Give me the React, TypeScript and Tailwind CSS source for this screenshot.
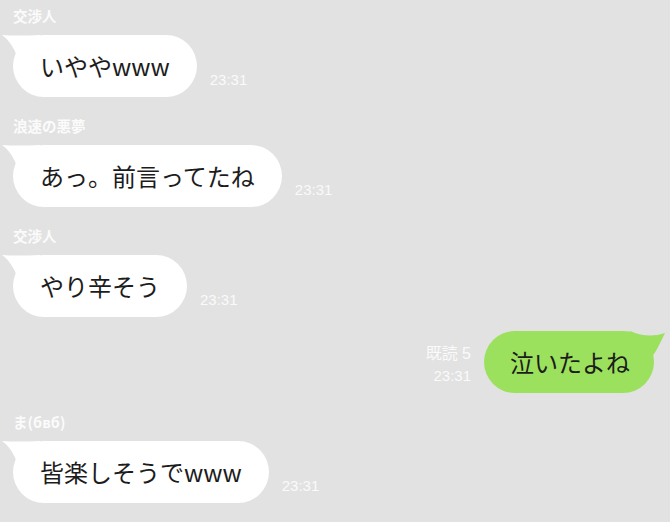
import React from "react";

type Msg = {
  side: "left" | "right";
  name?: string;
  text: string;
  time: string;
  read?: string;
};

const messages: Msg[] = [
  { side: "left", name: "交渉人", text: "いややwww", time: "23:31" },
  { side: "left", name: "浪速の悪夢", text: "あっ。前言ってたね", time: "23:31" },
  { side: "left", name: "交渉人", text: "やり辛そう", time: "23:31" },
  { side: "right", text: "泣いたよね", time: "23:31", read: "既読 5" },
  { side: "left", name: "ま(бвб)", text: "皆楽しそうでwww", time: "23:31" },
];

const LeftTail = () => (
  <svg className="absolute left-[-13px] top-[-2px]" width="44" height="30" viewBox="0 0 44 30">
    <path d="M2,2 Q16,3 40,2 L40,20 L18,26 C14,14 8,6 2,2 Z" fill="#ffffff" />
  </svg>
);

const RightTail = () => (
  <svg className="absolute right-[-14px] top-[-2px]" width="48" height="32" viewBox="0 0 48 32">
    <path d="M10,2 Q28,10 45,4 C40,14 36,24 30,30 L10,20 Z" fill="#9be15d" />
  </svg>
);

const LeftMessage = ({ m }: { m: Msg }) => (
  <div className="flex flex-col">
    <div className="ml-[13px] h-[20px] leading-[20px] text-[14.5px] font-bold text-[#fbfbfb] font-['Noto_Sans_CJK_JP',sans-serif]">
      {m.name}
    </div>
    <div className="mt-[9px] flex items-end pl-[13px]">
      <div className="relative h-[62px] rounded-full bg-white px-[27px] flex items-center">
        <LeftTail />
        <span className="relative text-[24px] text-[#1c1c1c] font-['Noto_Sans_CJK_JP',sans-serif]">
          {m.text}
        </span>
      </div>
      <div className="ml-[13px] mb-[8px] leading-[18px] text-[15px] text-[#fafafa] font-['Liberation_Sans',sans-serif]">
        {m.time}
      </div>
    </div>
  </div>
);

const RightMessage = ({ m }: { m: Msg }) => (
  <div className="flex items-end justify-end pr-[16px]">
    <div className="mr-[13px] mb-[8px] flex flex-col items-end gap-[4px] leading-[18px] text-[#fafafa] font-['Liberation_Sans','Noto_Sans_CJK_JP',sans-serif]">
      <span className="text-[16px]">{m.read}</span>
      <span className="text-[15px]">{m.time}</span>
    </div>
    <div className="relative h-[62px] rounded-full bg-[#9be15d] pl-[26px] pr-[24px] flex items-center">
      <RightTail />
      <span className="relative text-[24px] text-[#1c1c1c] font-['Noto_Sans_CJK_JP',sans-serif]">
        {m.text}
      </span>
    </div>
  </div>
);

export default function App() {
  return (
    <div className="w-[670px] h-[522px] overflow-hidden bg-[#e2e2e2] pt-[6px]">
      <div className="flex flex-col">
        {messages.map((m, i) => {
          const prev = messages[i - 1];
          let gap = "mt-0";
          if (i > 0) gap = m.side === "right" || prev?.side === "right" ? "mt-[14px]" : "mt-[19px]";
          if (i > 0 && prev?.side === "right" && m.name) gap = "mt-[19px]";
          return (
            <div key={i} className={gap}>
              {m.side === "left" ? <LeftMessage m={m} /> : <RightMessage m={m} />}
            </div>
          );
        })}
      </div>
    </div>
  );
}
